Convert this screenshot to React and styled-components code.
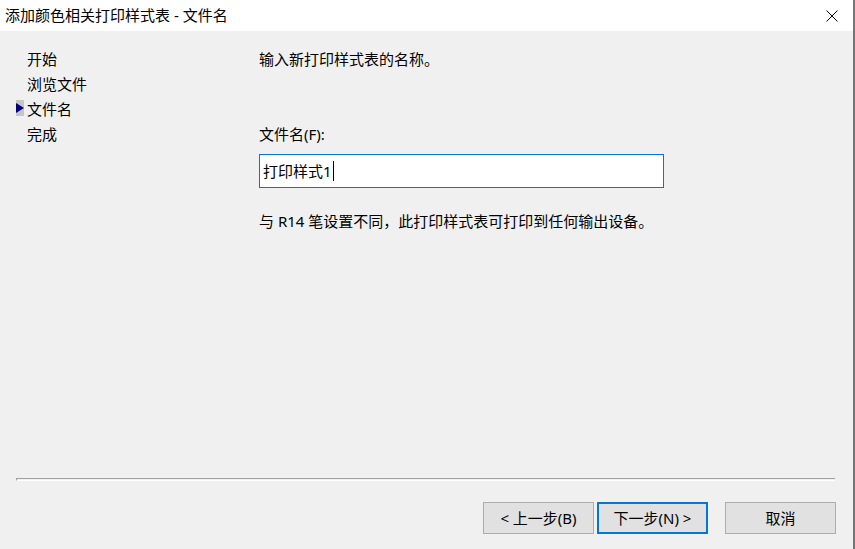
import styled, { createGlobalStyle } from "styled-components";

const GlobalStyle = createGlobalStyle`
  html, body {
    margin: 0;
    padding: 0;
    background: #f0f0f0;
  }
  body {
    font-family: "Noto Sans", "Noto Sans CJK SC", sans-serif;
    font-size: 15px;
    color: #000;
  }
`;

const steps = ["开始", "浏览文件", "文件名", "完成"];

const App = () => {
  return (
    <Window>
      <GlobalStyle />
      <TitleBar>
        <Title>添加颜色相关打印样式表 - 文件名</Title>
        <CloseButton>
          <svg width="12" height="12" viewBox="0 0 12 12">
            <path d="M0.5 0.5 L11.5 11.5 M11.5 0.5 L0.5 11.5" stroke="#000" strokeWidth="1" fill="none" />
          </svg>
        </CloseButton>
      </TitleBar>

      <Body>
        <Content>
          <StepList>
            {steps.map((s, i) => (
              <Step key={s}>
                {i === 2 && <Marker />}
                {s}
              </Step>
            ))}
          </StepList>

          <Main>
            <Text>输入新打印样式表的名称。</Text>
            <Label>文件名(F):</Label>
            <Input>
              打印样式1<Caret />
            </Input>
            <Note>与 R14 笔设置不同，此打印样式表可打印到任何输出设备。</Note>
          </Main>
        </Content>

        <Separator />

        <Footer>
          <Button>&lt; 上一步(B)</Button>
          <Button $primary>下一步(N) &gt;</Button>
          <CancelButton>取消</CancelButton>
        </Footer>
      </Body>
    </Window>
  );
};

export default App;

const Window = styled.div`
  width: 855px;
  height: 549px;
  box-sizing: border-box;
  border-right: 2px solid #767676;
  display: flex;
  flex-direction: column;
  background: #f0f0f0;
  overflow: hidden;
`;

const TitleBar = styled.div`
  height: 31px;
  flex-shrink: 0;
  background: #fff;
  display: flex;
  align-items: center;
  justify-content: space-between;
  padding: 0 15px 0 5px;
`;

const Title = styled.div`
  font-size: 15px;
  line-height: 20px;
  margin-top: -1px;
`;

const CloseButton = styled.div`
  display: flex;
  align-items: center;
`;

const Body = styled.div`
  flex: 1;
  display: flex;
  flex-direction: column;
`;

const Content = styled.div`
  flex: 1;
  display: flex;
  padding-top: 16px;
`;

const StepList = styled.div`
  width: 232px;
  padding-left: 27px;
  display: flex;
  flex-direction: column;
`;

const Step = styled.div`
  position: relative;
  line-height: 25px;
  height: 25px;
  white-space: nowrap;
`;

const Marker = styled.span`
  position: absolute;
  left: -11px;
  top: 3px;
  width: 8px;
  height: 16px;
  background: #c6c6c6;

  &::after {
    content: "";
    position: absolute;
    left: 0;
    top: 3px;
    border-top: 5px solid transparent;
    border-bottom: 5px solid transparent;
    border-left: 8px solid #000080;
  }
`;

const Main = styled.div`
  flex: 1;
  display: flex;
  flex-direction: column;
  align-items: flex-start;
`;

const Text = styled.div`
  line-height: 25px;
`;

const Label = styled.div`
  line-height: 25px;
  margin-top: 50px;
`;

const Input = styled.div`
  margin-top: 7px;
  width: 405px;
  height: 34px;
  box-sizing: border-box;
  border: 1px solid #0078d7;
  background: #fff;
  padding: 0 3px;
  display: flex;
  align-items: center;
  line-height: 20px;
  margin-bottom: 21px;
`;

const Caret = styled.span`
  display: inline-block;
  width: 1px;
  height: 20px;
  background: #000;
  margin-left: 1px;
`;

const Note = styled.div`
  line-height: 25px;
`;

const Separator = styled.div`
  margin: 0 18px 0 16px;
  height: 1px;
  border-top: 1px solid #a0a0a0;
  border-bottom: 1px solid #fff;
  border-left: 1px solid #a0a0a0;
  flex-shrink: 0;
`;

const Footer = styled.div`
  display: flex;
  justify-content: flex-end;
  align-items: center;
  gap: 3px;
  padding: 21px 17px 15px 0;
`;

const Button = styled.div`
  width: 111px;
  height: 32px;
  box-sizing: border-box;
  background: #e1e1e1;
  border: ${(p) => (p.$primary ? "2px solid #0078d7" : "1px solid #adadad")};
  display: flex;
  align-items: center;
  justify-content: center;
  font-size: 15px;
  line-height: 20px;
`;

const CancelButton = styled(Button)`
  margin-left: 14px;
`;
